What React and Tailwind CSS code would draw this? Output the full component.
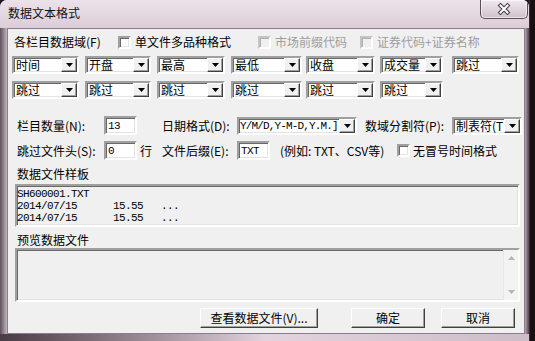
import React from "react";

const sunken =
  "border-2 border-t-[#a0a0a0] border-l-[#a0a0a0] border-b-white border-r-white shadow-[inset_1px_1px_0_#696969,inset_-1px_-1px_0_#e3e3e3]";
const raised =
  "border border-t-white border-l-white border-b-[#404040] border-r-[#404040] shadow-[inset_-1px_-1px_0_#a0a0a0]";
const mono = "font-['Liberation_Mono',monospace] text-[11px] tracking-[-0.6px]";

function Arrow({ color = "#000000" }) {
  return (
    <svg width="7" height="4" viewBox="0 0 7 4">
      <path d="M0 0H7L3.5 4Z" fill={color} />
    </svg>
  );
}

function Combo({ w, text, isMono }) {
  return (
    <div className={`${w} h-full flex bg-white ${sunken}`}>
      <div
        className={`flex-1 min-w-0 whitespace-nowrap flex items-center leading-[14px] ${
          isMono
            ? "pl-[1px] font-['Liberation_Mono',monospace] text-[11px] tracking-[-0.85px]"
            : "pl-[2px] text-[12px]"
        }`}
      >
        {text}
      </div>
      <div className={`w-[16px] h-full shrink-0 bg-[#f0f0f0] flex items-center justify-center ${raised}`}>
        <Arrow />
      </div>
    </div>
  );
}

function Input({ w, text }) {
  return (
    <div className={`${w} h-full bg-white ${sunken} pl-[2px] flex items-center leading-[14px] ${mono}`}>
      {text}
    </div>
  );
}

function Check({ disabled }) {
  return (
    <div
      className={
        disabled
          ? "w-[13px] h-[13px] shrink-0 bg-[#f0f0f0] border-2 border-t-[#c4c4c4] border-l-[#c4c4c4] border-b-white border-r-white shadow-[inset_1px_1px_0_#b0b0b0]"
          : `w-[13px] h-[13px] shrink-0 bg-white ${sunken}`
      }
    />
  );
}

function Btn({ cls, children }) {
  return (
    <div className={`${cls} h-full bg-[#f0f0f0] flex items-center justify-center ${raised} leading-[16px]`}>
      {children}
    </div>
  );
}

export default function App() {
  return (
    <div className="w-[535px] h-[341px] flex bg-[#1b1618] overflow-hidden font-['Noto_Sans_CJK_SC','Noto_Sans',sans-serif] text-[12px] text-black">
      <div className="w-[529px] h-[341px] flex flex-col rounded-t-[7px] bg-[#d9cbd6] overflow-hidden">
        {/* title bar */}
        <div className="h-[28px] flex items-start justify-between bg-linear-to-b from-[#ece2ea] to-[#dccdd8]">
          <div className="pl-[8px] pt-[6px] leading-[14px] text-[#111111]">数据文本格式</div>
          <div className="w-[48px] h-[19px] mr-[1px] border border-t-0 border-[#5b4d59] rounded-b-[5px] bg-linear-to-b from-[#f1e9ef] to-[#d0c1cc] shadow-[inset_0_0_0_1px_rgba(255,255,255,0.55)] flex items-center justify-center">
            <svg width="14" height="12" viewBox="0 0 14 12">
              <path d="M3.5 2.5L10.5 9.5M10.5 2.5L3.5 9.5" stroke="#3d3a40" strokeWidth="4" strokeLinecap="square" />
              <path d="M3.5 2.5L10.5 9.5M10.5 2.5L3.5 9.5" stroke="#ffffff" strokeWidth="2" strokeLinecap="square" />
            </svg>
          </div>
        </div>

        {/* body */}
        <div className="flex h-[306px]">
          <div className="w-[7px] bg-linear-to-r from-[#5e515c] to-[#c4b5c1]" />
          <div className="w-[518px] h-[306px] border border-[#8a7f89] bg-[#f0f0f0] flex flex-col">
            {/* row 1 */}
            <div className="mt-[3px] h-[20px] flex items-center">
              <div className="w-[110px] pl-[6px] whitespace-nowrap">各栏目数据域(F)</div>
              <div className="w-[140px] flex items-center">
                <Check />
                <span className="ml-[4px] whitespace-nowrap">单文件多品种格式</span>
              </div>
              <div className="w-[102px] flex items-center text-[#9d9d9d]">
                <Check disabled />
                <span className="ml-[4px] whitespace-nowrap">市场前缀代码</span>
              </div>
              <div className="flex items-center text-[#9d9d9d]">
                <Check disabled />
                <span className="ml-[4px] whitespace-nowrap">证券代码+证券名称</span>
              </div>
            </div>

            {/* row 2 */}
            <div className="mt-[4px] h-[18px] flex pl-[4px]">
              <Combo w="w-[67px]" text="时间" />
              <div className="ml-[6px]"><Combo w="w-[66px]" text="开盘" /></div>
              <div className="ml-[6px]"><Combo w="w-[68px]" text="最高" /></div>
              <div className="ml-[6px]"><Combo w="w-[71px]" text="最低" /></div>
              <div className="ml-[4px]"><Combo w="w-[69px]" text="收盘" /></div>
              <div className="ml-[5px]"><Combo w="w-[63px]" text="成交量" /></div>
              <div className="ml-[9px]"><Combo w="w-[67px]" text="跳过" /></div>
            </div>

            {/* row 3 */}
            <div className="mt-[7px] h-[18px] flex pl-[4px]">
              <Combo w="w-[67px]" text="跳过" />
              <div className="ml-[6px]"><Combo w="w-[66px]" text="跳过" /></div>
              <div className="ml-[6px]"><Combo w="w-[68px]" text="跳过" /></div>
              <div className="ml-[6px]"><Combo w="w-[71px]" text="跳过" /></div>
              <div className="ml-[4px]"><Combo w="w-[69px]" text="跳过" /></div>
              <div className="ml-[5px]"><Combo w="w-[63px]" text="跳过" /></div>
            </div>

            {/* row 4 */}
            <div className="mt-[17px] h-[19px] flex items-center">
              <div className="w-[96px] pl-[9px] whitespace-nowrap">栏目数量(N):</div>
              <Input w="w-[33px]" text="13" />
              <div className="ml-[25px] w-[75px] whitespace-nowrap">日期格式(D):</div>
              <div className="h-[18px]"><Combo w="w-[120px]" text="Y/M/D,Y-M-D,Y.M.]" isMono /></div>
              <div className="ml-[8px] w-[87px] whitespace-nowrap">数域分割符(P):</div>
              <div className="h-[18px]"><Combo w="w-[70px]" text="制表符(T" /></div>
            </div>

            {/* row 5 */}
            <div className="mt-[6px] h-[19px] flex items-center">
              <div className="w-[96px] pl-[9px] whitespace-nowrap">跳过文件头(S):</div>
              <Input w="w-[33px]" text="0" />
              <div className="ml-[3px] w-[22px]">行</div>
              <div className="w-[75px] whitespace-nowrap">文件后缀(E):</div>
              <Input w="w-[33px]" text="TXT" />
              <div className="ml-[10px] w-[117px] whitespace-nowrap">(例如: TXT、CSV等)</div>
              <Check />
              <span className="ml-[3px] whitespace-nowrap">无冒号时间格式</span>
            </div>

            {/* sample */}
            <div className="mt-[7px] h-[14px] pl-[9px] leading-[14px]">数据文件样板</div>
            <div className={`mt-[3px] ml-[7px] w-[505px] h-[43px] bg-[#f0f0f0] ${sunken} pt-[2px]`}>
              <div className={`${mono} leading-[12px] whitespace-pre`}>SH600001.TXT</div>
              <div className={`${mono} leading-[12px] whitespace-pre`}>2014/07/15      15.55   ...</div>
              <div className={`${mono} leading-[12px] whitespace-pre`}>2014/07/15      15.55   ...</div>
            </div>

            {/* preview */}
            <div className="mt-[6px] h-[14px] pl-[9px] leading-[14px]">预览数据文件</div>
            <div className={`mt-[1px] ml-[7px] w-[505px] h-[54px] bg-[#f0f0f0] ${sunken} flex justify-end`}>
              <div className="w-[15px] h-full border-l border-[#e6e6e6] bg-[#f3f3f3] flex flex-col justify-between items-center py-[6px]">
                <svg width="7" height="4" viewBox="0 0 7 4">
                  <path d="M0 4H7L3.5 0Z" fill="#b4b4b4" />
                </svg>
                <Arrow color="#b4b4b4" />
              </div>
            </div>

            {/* buttons */}
            <div className="mt-[6px] h-[20px] flex">
              <Btn cls="ml-[192px] w-[118px]">查看数据文件(V)...</Btn>
              <Btn cls="ml-[33px] w-[74px]">确定</Btn>
              <Btn cls="ml-[16px] w-[74px]">取消</Btn>
            </div>
          </div>
          <div className="w-[4px] bg-linear-to-r from-[#b7a8b4] to-[#54444f]" />
        </div>
        <div className="h-[7px] bg-linear-to-r from-[#4a3c47] via-[#e2d3de] to-[#cdbdc9]" />
      </div>
      <div className="w-[6px] h-full bg-[#17120f] border-l border-[#3a2a35]" />
    </div>
  );
}
